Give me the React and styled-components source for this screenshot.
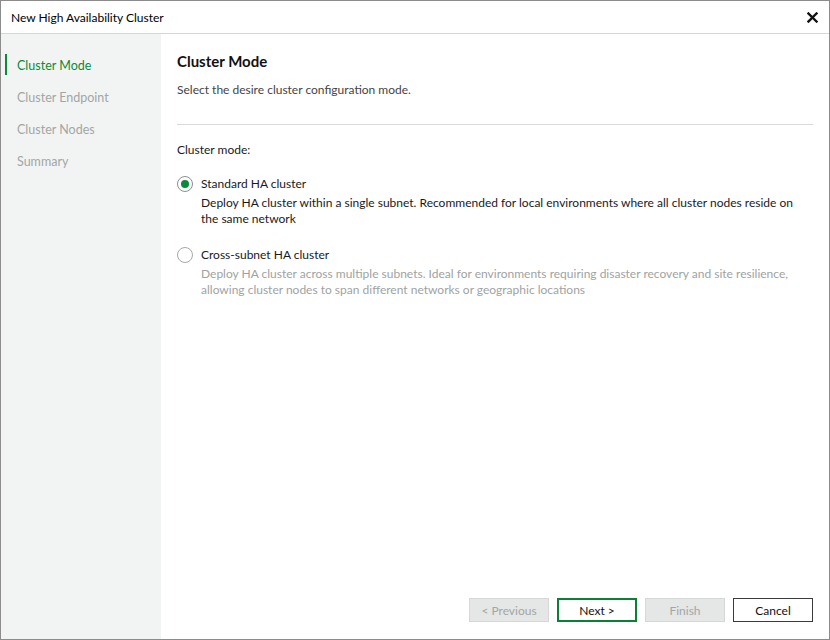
import React, { useState } from 'react';
import styled, { createGlobalStyle } from 'styled-components';

const GlobalStyle = createGlobalStyle`
  html, body {
    margin: 0;
    padding: 0;
    background: #ffffff;
  }
  body {
    font-family: Lato, "Open Sans", "Noto Sans", sans-serif;
    font-size: 12px;
    color: #1a1a1a;
  }
`;

const Window = styled.div`
  box-sizing: border-box;
  width: 830px;
  height: 640px;
  border: 1px solid #8c8c8c;
  display: flex;
  flex-direction: column;
  background: #ffffff;
`;

const TitleBar = styled.div`
  height: 32px;
  flex-shrink: 0;
  display: flex;
  align-items: center;
  justify-content: space-between;
  padding: 0 10px;
  border-bottom: 1px solid #d6d6d6;
  color: #000;
  font-size: 12px;
`;

const CloseButton = styled.button`
  border: none;
  background: none;
  padding: 0;
  width: 14px;
  height: 14px;
  display: flex;
  align-items: center;
  justify-content: center;
  cursor: pointer;
`;

const Body = styled.div`
  flex: 1;
  display: flex;
  min-height: 0;
`;

const Sidebar = styled.nav`
  width: 160px;
  flex-shrink: 0;
  background: #f2f4f3;
  padding-top: 15px;
  display: flex;
  flex-direction: column;
`;

const StepItem = styled.div`
  position: relative;
  height: 32px;
  display: flex;
  align-items: center;
  padding-left: 16px;
  color: ${(p) => (p.$active ? '#0a8a3a' : '#a3a6a5')};
  font-size: 12.5px;

  &::before {
    content: '';
    display: ${(p) => (p.$active ? 'block' : 'none')};
    position: absolute;
    left: 4px;
    top: 5px;
    width: 2px;
    height: 21px;
    background: #0a8a3a;
  }
`;

const Main = styled.main`
  flex: 1;
  display: flex;
  flex-direction: column;
  padding: 17px 16px 17px 16px;
  min-width: 0;
`;

const Heading = styled.h1`
  margin: 0;
  font-size: 15px;
  font-weight: 700;
  color: #111;
  line-height: 20px;
`;

const Subtitle = styled.p`
  margin: 11px 0 0;
  color: #444;
  line-height: 16px;
`;

const Divider = styled.hr`
  border: none;
  border-top: 1px solid #d9d9d9;
  margin: 26px 0 0;
`;

const FieldLabel = styled.div`
  margin-top: 17px;
  line-height: 16px;
  color: #1a1a1a;
`;

const OptionList = styled.div`
  display: flex;
  flex-direction: column;
  gap: 20px;
  margin-top: 18px;
`;

const Option = styled.label`
  display: grid;
  grid-template-columns: 24px 1fr;
  row-gap: 3px;
  cursor: pointer;
`;

const RadioCircle = styled.span`
  box-sizing: border-box;
  width: 16px;
  height: 16px;
  border-radius: 50%;
  border: 1px solid ${(p) => (p.$checked ? '#8f8f8f' : '#a8a8a8')};
  background: #fff;
  display: flex;
  align-items: center;
  justify-content: center;

  &::after {
    content: '';
    display: ${(p) => (p.$checked ? 'block' : 'none')};
    width: 8px;
    height: 8px;
    border-radius: 50%;
    background: #0a8a3a;
  }
`;

const OptionTitle = styled.span`
  line-height: 16px;
  color: #1a1a1a;
`;

const OptionDesc = styled.span`
  grid-column: 2;
  line-height: 16px;
  color: ${(p) => (p.$muted ? '#a0a3a2' : '#1a1a1a')};
`;

const Footer = styled.div`
  margin-top: auto;
  display: flex;
  justify-content: flex-end;
  gap: 8px;
`;

const Button = styled.button`
  box-sizing: border-box;
  width: 80px;
  height: 24px;
  font-family: inherit;
  font-size: 12px;
  cursor: pointer;
  background: ${(p) => (p.$disabled ? '#e5e6e6' : '#ffffff')};
  color: ${(p) => (p.$disabled ? '#a3a6a5' : '#111')};
  border: ${(p) =>
    p.$primary ? '2px solid #0a7f36' : p.$disabled ? '1px solid #d6d7d7' : '1px solid #3a3a3a'};
  padding: 0;
`;

const steps = ['Cluster Mode', 'Cluster Endpoint', 'Cluster Nodes', 'Summary'];

const options = [
  {
    id: 'standard',
    title: 'Standard HA cluster',
    desc: 'Deploy HA cluster within a single subnet. Recommended for local environments where all cluster nodes reside on the same network',
  },
  {
    id: 'cross',
    title: 'Cross-subnet HA cluster',
    desc: 'Deploy HA cluster across multiple subnets. Ideal for environments requiring disaster recovery and site resilience, allowing cluster nodes to span different networks or geographic locations',
  },
];

export default function App() {
  const [mode, setMode] = useState('standard');

  return (
    <>
      <GlobalStyle />
      <Window>
        <TitleBar>
          <span>New High Availability Cluster</span>
          <CloseButton aria-label="Close">
            <svg width="11" height="11" viewBox="0 0 11 11">
              <path d="M1.5 1.5 L9.5 9.5 M9.5 1.5 L1.5 9.5" stroke="#111" strokeWidth="2.4" strokeLinecap="square" />
            </svg>
          </CloseButton>
        </TitleBar>
        <Body>
          <Sidebar>
            {steps.map((s, i) => (
              <StepItem key={s} $active={i === 0}>
                {s}
              </StepItem>
            ))}
          </Sidebar>
          <Main>
            <Heading>Cluster Mode</Heading>
            <Subtitle>Select the desire cluster configuration mode.</Subtitle>
            <Divider />
            <FieldLabel>Cluster mode:</FieldLabel>
            <OptionList>
              {options.map((o) => {
                const checked = mode === o.id;
                return (
                  <Option key={o.id} onClick={() => setMode(o.id)}>
                    <RadioCircle $checked={checked} />
                    <OptionTitle>{o.title}</OptionTitle>
                    <OptionDesc $muted={!checked}>{o.desc}</OptionDesc>
                  </Option>
                );
              })}
            </OptionList>
            <Footer>
              <Button $disabled>&lt; Previous</Button>
              <Button $primary>Next &gt;</Button>
              <Button $disabled>Finish</Button>
              <Button>Cancel</Button>
            </Footer>
          </Main>
        </Body>
      </Window>
    </>
  );
}
